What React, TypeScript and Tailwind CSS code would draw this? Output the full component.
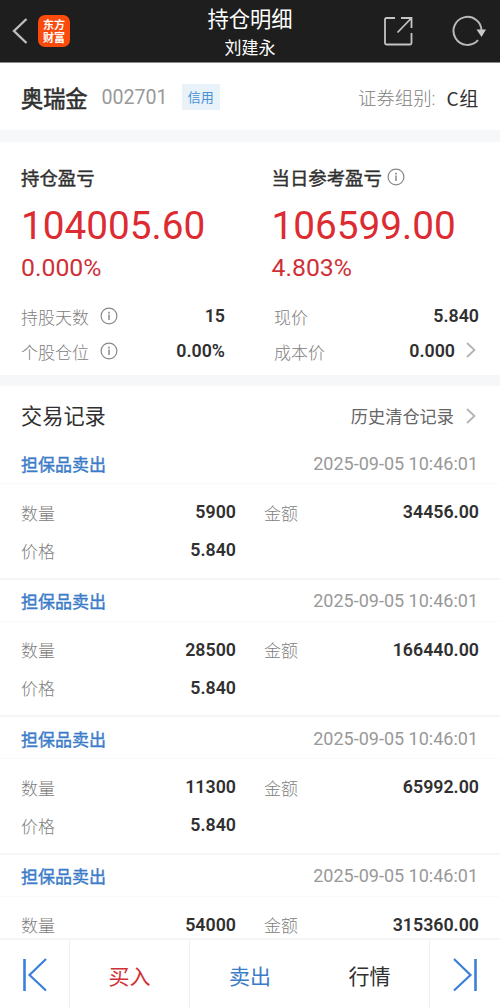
import React from "react";

const records = [
  { qty: "5900", amount: "34456.00", price: "5.840" },
  { qty: "28500", amount: "166440.00", price: "5.840" },
  { qty: "11300", amount: "65992.00", price: "5.840" },
  { qty: "54000", amount: "315360.00" },
];

function Info({ className = "" }: { className?: string }) {
  return (
    <svg className={className} width="18" height="18" viewBox="0 0 18 18" fill="none" stroke="#888">
      <circle cx="9" cy="9" r="7.900" strokeWidth="1.200" />
      <path d="M9 7.600v5.400" strokeWidth="1.500" />
      <path d="M9 4.800v1.600" strokeWidth="1.600" />
    </svg>
  );
}

function Chevron() {
  return (
    <svg width="10" height="16" viewBox="0 0 10 16" fill="none" stroke="#b3b3b3" strokeWidth="1.800">
      <path d="M1 1l7.500 7L1 15" />
    </svg>
  );
}

function Label({ children }: { children: React.ReactNode }) {
  return <span className="pt-[3px] text-[17px] leading-6 font-light text-[#808080]">{children}</span>;
}

function Value({ children, className = "" }: { children: React.ReactNode; className?: string }) {
  return <span className={`text-[17.8px] leading-6 font-semibold text-[#303030] ${className}`}>{children}</span>;
}

function Header() {
  return (
    <header className="grid h-[63px] shrink-0 grid-cols-[1fr_auto_1fr] border-b border-[#8a8a8a] bg-[#1e1e1e] text-white">
      <div className="flex items-center pl-3">
        <svg width="16" height="26" viewBox="0 0 16 26" fill="none" stroke="#bdbdbd" strokeWidth="2.400">
          <path d="M14.500 1L2 13l12.500 12" />
        </svg>
        <div className="ml-[10px] flex h-8 w-8 flex-col items-center justify-center rounded-[7px] bg-[#fa4a0c] pt-px text-[11px] leading-[13px] font-bold">
          <span>东方</span>
          <span>财富</span>
        </div>
      </div>
      <div className="flex flex-col items-center pt-[6px]">
        <div className="text-[21.3px] leading-[27px]">持仓明细</div>
        <div className="mt-[3px] text-[17px] leading-6">刘建永</div>
      </div>
      <div className="flex items-center justify-end pr-[14px]">
        <svg width="30" height="30" viewBox="0 0 30 30" fill="none" stroke="#c4c4c4" strokeWidth="1.800">
          <path d="M12 2H3.500Q2 2 2 3.500V27q0 1.500 1.500 1.500H27q1.500 0 1.500-1.500V17" />
          <path d="M18 2h10.500v10M28 2.500L14.500 16.500" />
        </svg>
        <svg className="ml-[39px]" width="34" height="32" viewBox="0 0 34 32" fill="none" stroke="#b8b8b8" strokeWidth="2">
          <path d="M26 25.200A14 14 0 1 1 29.500 16.500" />
          <path d="M24.500 14.500h9.500l-4.500 7.500z" fill="#c8c8c8" stroke="none" />
        </svg>
      </div>
    </header>
  );
}

function Record({ qty, amount, price }: { qty: string; amount: string; price?: string }) {
  return (
    <article className="flex h-[137.5px] shrink-0 flex-col border-b-2 border-[#f5f5f6]">
      <div className="flex h-[42px] shrink-0 items-center justify-between border-b border-[#fafafa] pt-[2px] pr-[22px] pl-[21px]">
        <span className="pt-[2px] text-[17px] leading-6 text-[#3b7cc9] [-webkit-text-stroke:0.4px]">担保品卖出</span>
        <span className="text-[18px] leading-6 text-[#999]">2025-09-05 10:46:01</span>
      </div>
      <div className="mt-[9px] flex h-[38px] shrink-0 items-center px-[21px]">
        <Label>数量</Label>
        <Value className="ml-auto">{qty}</Value>
        <div className="ml-7 flex w-[215px] items-center justify-between">
          <Label>金额</Label>
          <Value>{amount}</Value>
        </div>
      </div>
      {price && (
        <div className="flex h-[38px] shrink-0 items-center justify-between pr-[264px] pl-[21px]">
          <Label>价格</Label>
          <Value>{price}</Value>
        </div>
      )}
    </article>
  );
}

function Stat({ label, value, info, arrow }: { label: string; value: string; info?: boolean; arrow?: boolean }) {
  return (
    <div className="flex h-[35px] items-center">
      <Label>{label}</Label>
      {info && <Info className="mb-px ml-[11px]" />}
      <Value className="ml-auto pb-[2px]">{value}</Value>
      {arrow && (
        <span className="mr-[3px] mb-[3px] ml-[11px]">
          <Chevron />
        </span>
      )}
    </div>
  );
}

export default function App() {
  return (
    <div className="flex h-[1008px] w-[500px] flex-col overflow-hidden bg-white font-[Roboto,'Noto_Sans_CJK_SC',sans-serif] text-[#303030]">
      <Header />
      <section className="flex h-[67px] shrink-0 items-center px-[21px]">
        <span className="pt-[4px] text-[22.2px] leading-8 [-webkit-text-stroke:0.6px]">奥瑞金</span>
        <span className="ml-[14px] pt-[2px] text-[19.6px] leading-8 text-[#999]">002701</span>
        <span className="ml-[14px] flex h-[26px] w-[38px] items-center justify-center bg-[#e9f1f9] pt-[2px] text-[13px] text-[#4590d6]">信用</span>
        <span className="ml-auto pt-[4px] text-[18.4px] leading-8 font-light text-[#808080]">证券组别:</span>
        <span className="ml-[11px] pt-[2px] font-['Noto_Sans_CJK_SC',sans-serif] text-[19px] leading-8 tracking-[0.7px]">C组</span>
      </section>
      <div className="h-3 shrink-0 bg-[#f6f7f9]" />
      <section className="h-[233px] shrink-0 pt-[21px]">
        <div className="grid grid-cols-2 pl-[21px]">
          {[
            ["持仓盈亏", "104005.60", "0.000%"],
            ["当日参考盈亏", "106599.00", "4.803%"],
          ].map(([label, value, pct], i) => (
            <div key={label} className={i ? "pl-[11px]" : ""}>
              <div className="flex h-7 items-center text-[18.4px]">
                <span className="pt-[4px] [-webkit-text-stroke:0.4px]">{label}</span>
                {i === 1 && <Info className="ml-[5px]" />}
              </div>
              <div className="mt-[11px] text-[38.700px] leading-[48px] text-[#dc2b31]">{value}</div>
              <div className="mt-[2px] text-[24.800px] leading-8 text-[#cf3038]">{pct}</div>
            </div>
          ))}
        </div>
        <div className="mt-[15px] grid grid-cols-[204px_1fr] gap-x-[49px] px-[21px]">
          <Stat label="持股天数" value="15" info />
          <Stat label="现价" value="5.840" />
          <Stat label="个股仓位" value="0.00%" info />
          <Stat label="成本价" value="0.000" arrow />
        </div>
      </section>
      <div className="h-[11px] shrink-0 bg-[#f6f7f9]" />
      <section className="flex min-h-0 flex-1 flex-col overflow-hidden">
        <div className="flex h-[56px] shrink-0 items-center pt-[3px] pr-[24px] pl-[21px]">
          <span className="pt-[3px] text-[21.2px] leading-8">交易记录</span>
          <span className="mr-[12px] ml-auto pt-[3px] text-[17.2px] leading-8 text-[#666]">历史清仓记录</span>
          <Chevron />
        </div>
        {records.map((r) => (
          <Record key={r.qty} {...r} />
        ))}
      </section>
      <nav className="grid h-[70px] shrink-0 grid-cols-[70px_120px_120px_120px_1fr] border-t-2 border-[#f5f5f5] text-[21px]">
        <button className="flex items-center justify-center border-r border-[#f0f0f0] pt-px">
          <svg width="24" height="34" viewBox="0 0 24 34" fill="none" stroke="#3b7fd9" strokeWidth="2.600">
            <path d="M1.500 1v32" />
            <path d="M23 1L6.500 17L23 32.500" strokeWidth="2.200" />
          </svg>
        </button>
        <button className="border-r border-[#f0f0f0] pt-[7px] text-[#d23037]">买入</button>
        <button className="pt-[7px] text-[#3b7cc9]">卖出</button>
        <button className="border-r border-[#f0f0f0] pt-[7px]">行情</button>
        <button className="flex items-center justify-center pt-px">
          <svg width="24" height="34" viewBox="0 0 24 34" fill="none" stroke="#3b7fd9" strokeWidth="2.600">
            <path d="M22.500 1v32" />
            <path d="M1 1L17.500 17L1 32.500" strokeWidth="2.200" />
          </svg>
        </button>
      </nav>
    </div>
  );
}
